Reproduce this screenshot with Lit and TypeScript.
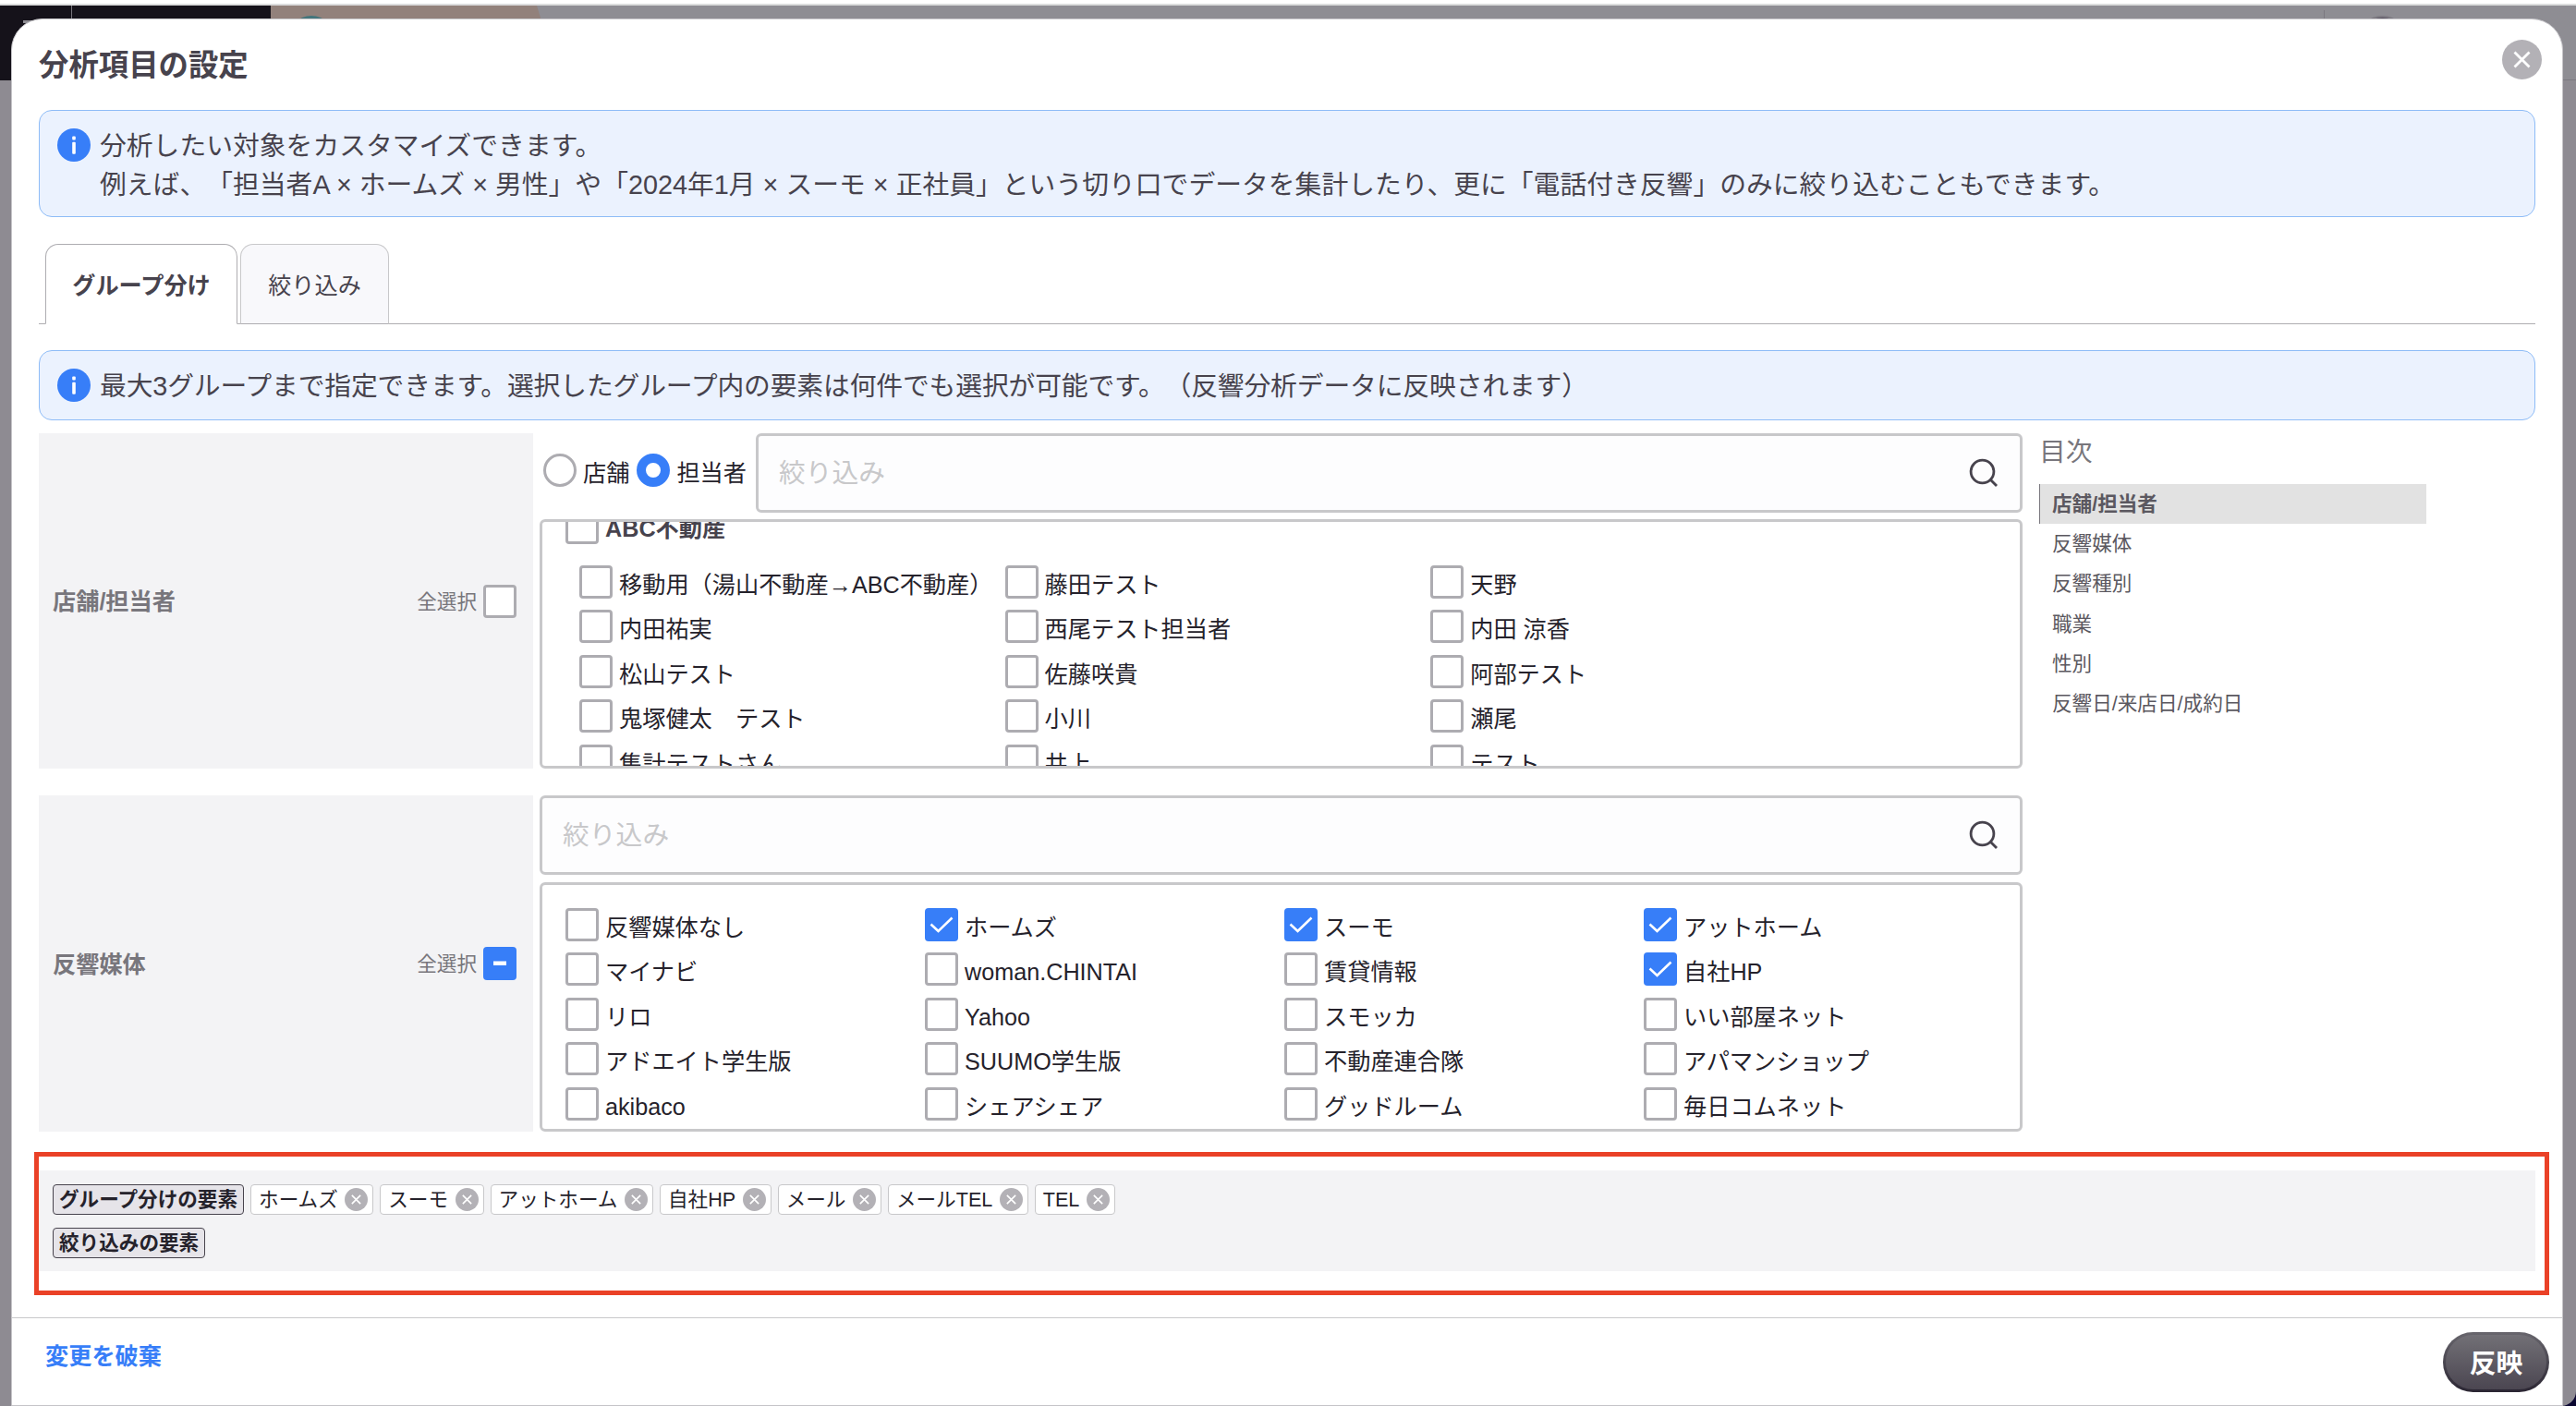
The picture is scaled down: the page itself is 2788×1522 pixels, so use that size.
import { html, css, svg, LitElement } from "lit";
import { customElement, property } from "lit/decorators.js";
import { classMap } from "lit/directives/class-map.js";

const staff = [
  ["移動用（湯山不動産→ABC不動産）", "藤田テスト", "天野"],
  ["内田祐実", "西尾テスト担当者", "内田 涼香"],
  ["松山テスト", "佐藤咲貴", "阿部テスト"],
  ["鬼塚健太　テスト", "小川", "瀬尾"],
  ["集計テストさん", "井上", "テスト"],
];

const media = [
  ["反響媒体なし", "ホームズ", "スーモ", "アットホーム"],
  ["マイナビ", "woman.CHINTAI", "賃貸情報", "自社HP"],
  ["リロ", "Yahoo", "スモッカ", "いい部屋ネット"],
  ["アドエイト学生版", "SUUMO学生版", "不動産連合隊", "アパマンショップ"],
  ["akibaco", "シェアシェア", "グッドルーム", "毎日コムネット"],
];

const checkedMedia = ["ホームズ", "スーモ", "アットホーム", "自社HP"];
const chips = [...checkedMedia, "メール", "メールTEL", "TEL"];
const toc = ["店舗/担当者", "反響媒体", "反響種別", "職業", "性別", "反響日/来店日/成約日"];

@customElement("app-check")
export class AppCheck extends LitElement {
  @property({ type: String }) state: "off" | "on" | "mixed" = "off";

  static styles = css`
    :host {
      display: block;
      flex: none;
      width: 36px;
      height: 36px;
    }
    .box {
      box-sizing: border-box;
      width: 36px;
      height: 36px;
      border: 3px solid #adacb1;
      border-radius: 4px;
      background: #fff;
    }
    .box--filled {
      border: 0;
      background: #377ef8;
    }
    svg {
      display: block;
    }
  `;

  render() {
    const mark =
      this.state === "on"
        ? svg`<path d="M6.5 17.5 L14.5 25 L29.5 10.5" fill="none" stroke="#fff" stroke-width="2.6"/>`
        : svg`<rect x="11" y="15.5" width="14" height="4.5" fill="#fff"/>`;
    return html`<div class=${classMap({ box: true, "box--filled": this.state !== "off" })}>
      ${this.state === "off" ? "" : html`<svg width="36" height="36" viewBox="0 0 36 36">${mark}</svg>`}
    </div>`;
  }
}

@customElement("app-close")
export class AppClose extends LitElement {
  static styles = css`
    :host {
      display: block;
      flex: none;
    }
    svg {
      display: block;
      width: 100%;
      height: 100%;
    }
  `;

  render() {
    return html`<svg viewBox="0 0 43 43">
      <circle cx="21.5" cy="21.5" r="21.5" fill="#b3b1b6" />
      <path d="M13.5 13.5 L29.5 29.5 M29.5 13.5 L13.5 29.5" stroke="#fff" stroke-width="2.8" />
    </svg>`;
  }
}

@customElement("app-info")
export class AppInfo extends LitElement {
  static styles = css`
    :host {
      display: flex;
      box-sizing: border-box;
      gap: 10px;
      padding: 18px 19px;
      border: 1px solid #8ebcf7;
      border-radius: 14px;
      background: #ebf2fe;
      color: #47434d;
      font-size: 28.8px;
      line-height: 41.6px;
    }
    svg {
      flex: none;
      display: block;
      margin-top: 1px;
    }
  `;

  render() {
    return html`
      <svg width="36" height="36" viewBox="0 0 36 36">
        <circle cx="18" cy="18" r="18" fill="#377ef8" />
        <rect x="16.2" y="8.5" width="3.6" height="4" rx="1" fill="#fff" />
        <rect x="16.2" y="14.8" width="3.6" height="13" rx="1" fill="#fff" />
      </svg>
      <div><slot></slot></div>
    `;
  }
}

@customElement("app-search")
export class AppSearch extends LitElement {
  static styles = css`
    :host {
      display: flex;
      box-sizing: border-box;
      align-items: center;
      justify-content: space-between;
      height: 86px;
      padding: 0 23px 1px 22px;
      border: 3px solid #c8c8ca;
      border-radius: 6px;
      background: #fdfdfe;
      color: #c8c8ca;
      font-size: 28.8px;
      line-height: 40px;
    }
    svg {
      display: block;
    }
  `;

  render() {
    return html`
      <span>絞り込み</span>
      <svg width="32" height="32" viewBox="0 0 32 32" fill="none" stroke="#47434d" stroke-width="2.8">
        <circle cx="14.5" cy="14.5" r="12.4" />
        <path d="M23 23 L30 30" />
      </svg>
    `;
  }
}

@customElement("app-root")
export class AppRoot extends LitElement {
  static styles = css`
    :host {
      display: block;
      box-sizing: border-box;
      position: relative;
      width: 2788px;
      height: 1522px;
      padding-top: 4px;
      overflow: hidden;
      background: #fff;
      font-family: "Liberation Sans", "Noto Sans CJK JP", sans-serif;
      text-spacing-trim: space-all;
      color: #25222b;
    }
    * {
      box-sizing: border-box;
    }
    .backdrop {
      position: absolute;
      inset: 0;
      background: linear-gradient(#fff, #fff) 0 0 / 100% 100px no-repeat, #0a0630;
    }
    .page {
      position: relative;
      height: 1518px;
      border-top: 2px solid #dcdddd;
      border-radius: 0 0 16px 0;
      background: #8e8b92;
      overflow: hidden;
    }
    .topbar {
      display: flex;
      height: 81px;
      border-bottom: 1px solid #7b7880;
      background: #8e8d93;
    }
    .topbar__menu {
      width: 78px;
      height: 81px;
      padding: 16px 0 0 25px;
      border-right: 1px solid #77747c;
      background: #15121a;
    }
    .topbar__bars {
      width: 28px;
      height: 3px;
      background: #8e8d93;
    }
    .topbar__logo {
      width: 215px;
      height: 81px;
      background: #15121a;
    }
    .topbar__banner {
      width: 294px;
      background: #92817b;
      clip-path: polygon(0 0, 288px 0, 294px 20px, 294px 100%, 0 100%);
    }
    .topbar__badge {
      width: 52px;
      height: 52px;
      margin: 11px 0 0 18px;
      border-radius: 50%;
      background: #43757c;
    }
    .topbar__user {
      height: 60px;
      margin: 5px 182px 0 auto;
      padding: 6px 0 0 35px;
      border-left: 1px solid #7b7880;
    }
    .topbar__avatar {
      width: 55px;
      height: 55px;
      border: 2px solid #7b7880;
      border-radius: 50%;
      background: #57505f;
    }
    .modal {
      position: absolute;
      left: 12px;
      top: 20px;
      width: 2762px;
      height: 1502px;
      padding: 0 29px;
      border: 1px solid #c5c4c8;
      border-radius: 34px 34px 0 0;
      background: #fff;
    }
    .head {
      display: flex;
      justify-content: space-between;
      height: 98px;
    }
    .head__title {
      margin: 0;
      padding-top: 26px;
      font-size: 32.4px;
      line-height: 48px;
      color: #47434d;
    }
    .head__close {
      width: 43px;
      height: 43px;
      margin: 22px -7px 0 0;
    }
    .intro {
      height: 116px;
    }
    .tabs {
      display: flex;
      gap: 3px;
      height: 87px;
      margin-top: 29px;
      padding-left: 7px;
      background: linear-gradient(#aeadb1, #aeadb1) 0 100% / 100% 1px no-repeat;
    }
    .tab {
      display: flex;
      align-items: center;
      justify-content: center;
      width: 161px;
      padding-bottom: 1px;
      border: 1px solid #c8c8ca;
      border-bottom-color: #aeadb1;
      border-radius: 14px 14px 0 0;
      background: #f8f8fb;
      font-size: 25.2px;
      color: #47434d;
    }
    .tab--active {
      width: 208px;
      border-color: #aeadb1;
      border-bottom-color: #fff;
      background: #fff;
      font-weight: bold;
    }
    .hint {
      height: 76px;
      margin-top: 28px;
      letter-spacing: -0.15px;
    }
    .body {
      display: grid;
      grid-template-columns: 2147px 419px;
      column-gap: 18px;
      height: 777px;
      margin-top: 14px;
    }
    .groups {
      display: flex;
      flex-direction: column;
      gap: 29px;
    }
    .group {
      display: grid;
      grid-template-columns: 535px 1605px;
      gap: 7px;
      height: 363px;
    }
    .group--media {
      height: 364px;
    }
    .group__label {
      display: flex;
      align-items: center;
      justify-content: space-between;
      padding: 0 18px 0 15px;
      background: #f3f3f5;
      color: #78767c;
      font-size: 25.2px;
      font-weight: bold;
    }
    .group__label span {
      padding-bottom: 3px;
    }
    .group__all {
      display: flex;
      align-items: center;
      gap: 7px;
      font-size: 21.6px;
      font-weight: normal;
    }
    .group__main {
      display: flex;
      flex-direction: column;
      justify-content: space-between;
      min-width: 0;
    }
    .filter {
      display: flex;
    }
    .filter app-search {
      flex: 1;
    }
    .radio {
      display: flex;
      padding-top: 22px;
      margin-left: 4px;
      font-size: 25.2px;
      line-height: 43px;
      white-space: nowrap;
    }
    .radio__dot {
      flex: none;
      width: 36px;
      height: 36px;
      margin-right: 7px;
      border: 3px solid #adacb1;
      border-radius: 50%;
      background: #fff;
    }
    .radio__dot--on {
      border: 10px solid #377ef8;
    }
    .radio + .radio {
      margin: 0 10px 0 8px;
    }
    .list {
      display: flex;
      flex-direction: column;
      height: 270px;
      padding: 25px;
      border: 3px solid #c8c8ca;
      border-radius: 6px;
      background: #fff;
      overflow: hidden;
      font-size: 25.2px;
      line-height: 43px;
    }
    /* scrolled a little, so the company row is cut by the top edge */
    .list--scrolled {
      padding-top: 0;
    }
    .list__company {
      display: flex;
      gap: 7px;
      flex: none;
      height: 59px;
      margin-top: -12px;
      font-weight: bold;
      line-height: 38px;
      color: #47434d;
    }
    .row {
      display: grid;
      flex: none;
      height: 48.4px;
    }
    .row--staff {
      grid-template-columns: repeat(3, 460.6px);
      margin-left: 15px;
    }
    .row--media {
      grid-template-columns: repeat(4, 389px);
    }
    .item {
      display: flex;
      gap: 7px;
      white-space: nowrap;
    }
    .toc__title {
      height: 55px;
      font-size: 28.8px;
      line-height: 40px;
      color: #78767c;
    }
    .toc__item {
      height: 43.2px;
      padding-left: 14px;
      font-size: 21.6px;
      line-height: 43px;
      color: #5b5860;
    }
    .toc__item--active {
      border-left: 1px solid #78767c;
      padding-left: 13px;
      background: #e2e2e2;
      font-weight: bold;
    }
    .picked {
      height: 109px;
      margin-top: 21px;
      padding: 15px;
      background: #f3f3f5;
    }
    .picked__row {
      display: flex;
      gap: 7.2px;
      height: 47px;
    }
    .chip {
      display: flex;
      align-items: center;
      gap: 7.5px;
      height: 33px;
      padding: 0 5px 0 7.8px;
      border: 1px solid #c8c8ca;
      border-radius: 4px;
      background: #fff;
      font-size: 21.6px;
      line-height: 31px;
      white-space: nowrap;
    }
    .chip--name {
      padding: 0 6px;
      border-color: #47434d;
      background: #e6e4e9;
      font-weight: bold;
    }
    .chip__close {
      width: 25px;
      height: 25px;
    }
    .foot {
      display: flex;
      justify-content: space-between;
      height: 94px;
      margin: 50px -29px 0;
      padding: 15px 14px 0 36px;
      border-top: 1px solid #c8c8ca;
    }
    .foot__discard {
      padding-top: 5px;
      color: #377ef8;
      font-size: 25.2px;
      font-weight: bold;
      line-height: 42px;
    }
    .foot__apply {
      width: 115px;
      height: 65px;
      padding: 0 0 3px;
      border: 3px solid transparent;
      border-radius: 33px;
      background: linear-gradient(#727076, #4b4651) padding-box, linear-gradient(#68666d, #2b2633) border-box;
      color: #fff;
      font: bold 28.8px "Liberation Sans", "Noto Sans CJK JP", sans-serif;
    }
    .marker {
      position: absolute;
      left: 37px;
      top: 1247px;
      width: 2722px;
      height: 155px;
      border: 5px solid #ea4127;
    }
  `;

  private renderItem(name: string, checked = false) {
    return html`<div class="item"><app-check state=${checked ? "on" : "off"}></app-check><span>${name}</span></div>`;
  }

  render() {
    return html`
      <div class="backdrop"></div>
      <div class="page">
        <div class="topbar">
          <div class="topbar__menu"><div class="topbar__bars"></div></div>
          <div class="topbar__logo"></div>
          <div class="topbar__banner"><div class="topbar__badge"></div></div>
          <div class="topbar__user"><div class="topbar__avatar"></div></div>
        </div>
      </div>
      <div class="modal">
        <div class="head">
          <h1 class="head__title">分析項目の設定</h1>
          <app-close class="head__close"></app-close>
        </div>
        <app-info class="intro">
          分析したい対象をカスタマイズできます。<br />例えば、「担当者A × ホームズ × 男性」や「2024年1月 × スーモ × 正社員」という切り口でデータを集計したり、更に「電話付き反響」のみに絞り込むこともできます。
        </app-info>
        <div class="tabs">
          <div class="tab tab--active">グループ分け</div>
          <div class="tab">絞り込み</div>
        </div>
        <app-info class="hint">
          最大3グループまで指定できます。選択したグループ内の要素は何件でも選択が可能です。（反響分析データに反映されます）
        </app-info>
        <div class="body">
          <div class="groups">
            <div class="group">
              <div class="group__label">
                <span>店舗/担当者</span>
                <div class="group__all"><span>全選択</span><app-check></app-check></div>
              </div>
              <div class="group__main">
                <div class="filter">
                  <div class="radio"><span class="radio__dot"></span>店舗</div>
                  <div class="radio"><span class="radio__dot radio__dot--on"></span>担当者</div>
                  <app-search></app-search>
                </div>
                <div class="list list--scrolled">
                  <div class="list__company"><app-check></app-check>ABC不動産</div>
                  ${staff.map((row) => html`<div class="row row--staff">${row.map((n) => this.renderItem(n))}</div>`)}
                </div>
              </div>
            </div>
            <div class="group group--media">
              <div class="group__label">
                <span>反響媒体</span>
                <div class="group__all"><span>全選択</span><app-check state="mixed"></app-check></div>
              </div>
              <div class="group__main">
                <app-search></app-search>
                <div class="list">
                  ${media.map(
                    (row) => html`<div class="row row--media">
                      ${row.map((n) => this.renderItem(n, checkedMedia.includes(n)))}
                    </div>`
                  )}
                </div>
              </div>
            </div>
          </div>
          <div class="toc">
            <div class="toc__title">目次</div>
            ${toc.map(
              (name, i) => html`<div class=${classMap({ toc__item: true, "toc__item--active": i === 0 })}>${name}</div>`
            )}
          </div>
        </div>
        <div class="picked">
          <div class="picked__row">
            <div class="chip chip--name">グループ分けの要素</div>
            ${chips.map((name) => html`<div class="chip">${name}<app-close class="chip__close"></app-close></div>`)}
          </div>
          <div class="picked__row"><div class="chip chip--name">絞り込みの要素</div></div>
        </div>
        <div class="foot">
          <div class="foot__discard">変更を破棄</div>
          <button class="foot__apply">反映</button>
        </div>
      </div>
      <div class="marker"></div>
    `;
  }
}
